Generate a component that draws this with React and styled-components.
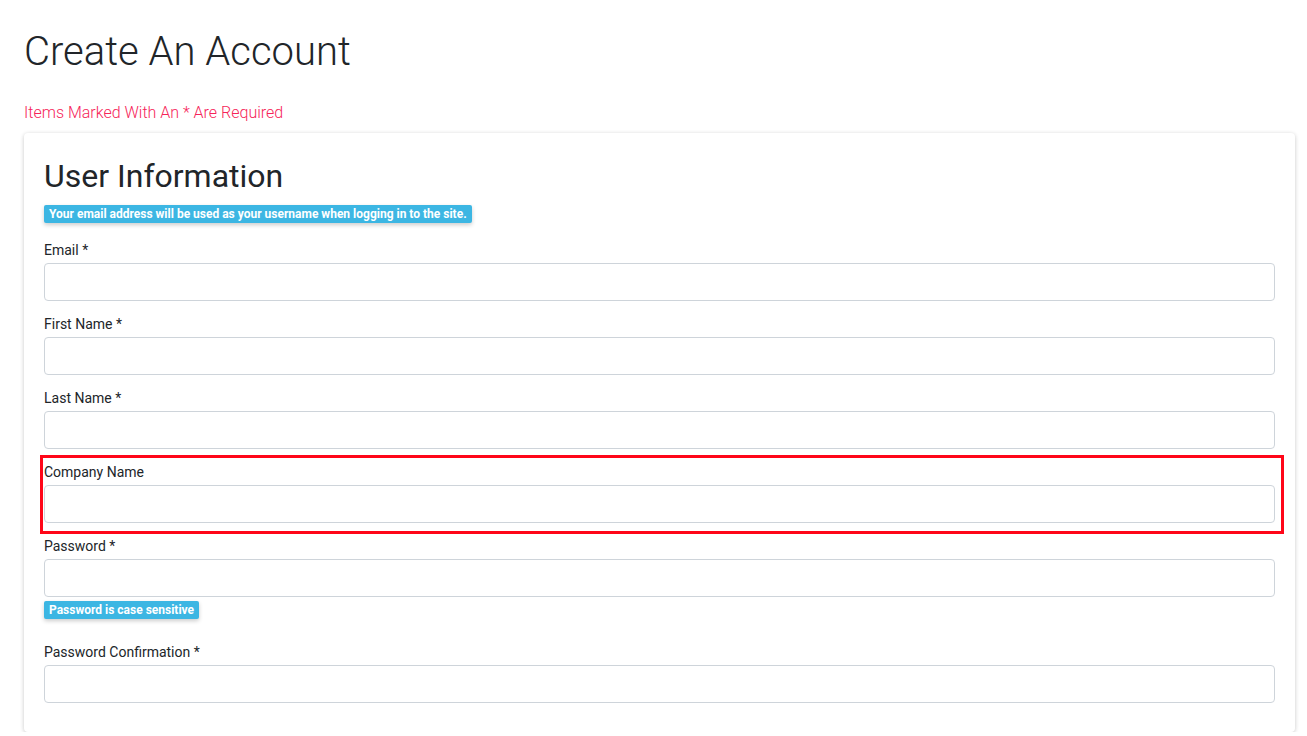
import React from "react";
import styled, { createGlobalStyle } from "styled-components";

const GlobalStyle = createGlobalStyle`
  body {
    margin: 0;
    background: #fff;
    font-family: Roboto, "Liberation Sans", sans-serif;
    color: #212529;
  }
  * { box-sizing: border-box; }
`;

const Page = styled.div`
  padding: 0 12px 0 24px;
`;

const Title = styled.h1`
  margin: 28px 0 0;
  font-size: 40px;
  line-height: 48px;
  font-weight: 300;
  color: #212529;
`;

const Required = styled.p`
  margin: 25px 0 8px;
  font-size: 16px;
  line-height: 24px;
  font-weight: 300;
  color: #f62459;
`;

const Card = styled.div`
  background: #fff;
  border-radius: 4px;
  box-shadow: 0 1px 4px rgba(0, 0, 0, 0.22);
  padding: 24px 20px 18px;
`;

const Heading = styled.h2`
  margin: 0 0 8px;
  font-size: 32px;
  line-height: 38px;
  font-weight: 400;
  color: #212529;
`;

const Hint = styled.span`
  display: inline-block;
  background: #3cb6e3;
  color: #fff;
  font-size: 12px;
  font-weight: 700;
  line-height: 18px;
  padding: 0 5px;
  border-radius: 2px;
  box-shadow: 0 2px 4px rgba(0, 0, 0, 0.2);
  margin-bottom: ${(p) => p.$after || 0}px;
  margin-top: ${(p) => p.$before || 0}px;
`;

const Group = styled.div`
  position: relative;
  margin-bottom: 11px;
`;

const Label = styled.label`
  display: block;
  font-size: 14px;
  line-height: 25px;
  color: #212529;
`;

const Input = styled.input`
  display: block;
  width: 100%;
  height: 38px;
  border: 1px solid #ced4da;
  border-radius: 4px;
  padding: 6px 12px;
  font-family: inherit;
  font-size: 16px;
  background: #fff;
`;

const Highlight = styled.div`
  position: absolute;
  top: -5px;
  left: -4px;
  right: -9px;
  bottom: -11px;
  border: 3px solid #ff0618;
  pointer-events: none;
`;

const fields = [
  { label: "Email *", type: "email" },
  { label: "First Name *" },
  { label: "Last Name *" },
  { label: "Company Name", highlight: true },
  { label: "Password *", type: "password", hint: "Password is case sensitive" },
  { label: "Password Confirmation *", type: "password" },
];

function Field({ label, type = "text", highlight, hint }) {
  return (
    <Group>
      <Label>{label}</Label>
      <Input type={type} />
      {hint && <Hint $before={4} $after={10}>{hint}</Hint>}
      {highlight && <Highlight />}
    </Group>
  );
}

export default function App() {
  return (
    <Page>
      <GlobalStyle />
      <Title>Create An Account</Title>
      <Required>Items Marked With An * Are Required</Required>
      <Card>
        <Heading>User Information</Heading>
        <Hint $after={15}>
          Your email address will be used as your username when logging in to the site.
        </Hint>
        {fields.map((f) => (
          <Field key={f.label} {...f} />
        ))}
      </Card>
    </Page>
  );
}
